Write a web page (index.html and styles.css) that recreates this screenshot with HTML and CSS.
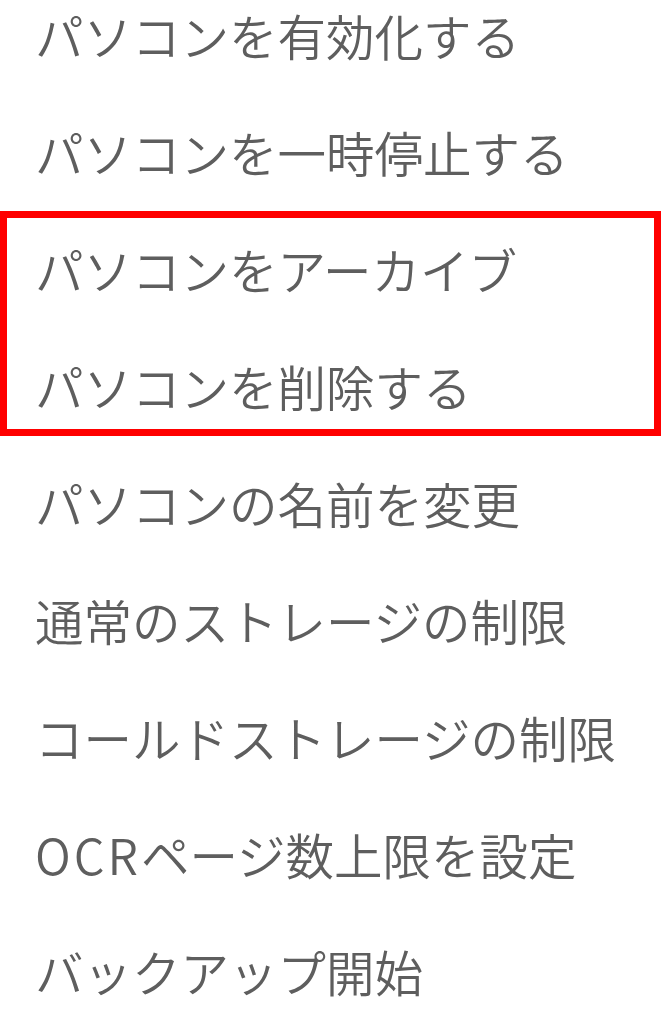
FILE: index.html
```html
<!DOCTYPE html>
<html lang="ja">
<head>
<meta charset="utf-8">
<title>メニュー</title>
<link rel="stylesheet" href="styles.css">
</head>
<body>
<div class="page">
  <ul class="menu">
    <li class="item">パソコンを有効化する</li>
    <li class="item">パソコンを一時停止する</li>
    <li class="item">パソコンをアーカイブ</li>
    <li class="item">パソコンを削除する</li>
    <li class="item">パソコンの名前を変更</li>
    <li class="item">通常のストレージの制限</li>
    <li class="item">コールドストレージの制限</li>
    <li class="item"><span class="latin">OCR</span>ページ数上限を設定</li>
    <li class="item">バックアップ開始</li>
  </ul>
  <div class="highlight"></div>
</div>
</body>
</html>
```
FILE: styles.css
```css
html, body {
  margin: 0;
  padding: 0;
  background: #ffffff;
}
.page {
  position: relative;
  width: 661px;
  height: 1021px;
  overflow: hidden;
}
.menu {
  list-style: none;
  margin: -23px 0 0 0;
  padding: 0 0 0 35px;
  display: flex;
  flex-direction: column;
}
.item {
  height: 117px;
  line-height: 117px;
  font-family: "Noto Sans CJK JP", "Noto Sans", sans-serif;
  font-size: 48.5px;
  font-weight: 350;
  color: #5e5e5e;
  white-space: nowrap;
}
.latin {
  letter-spacing: 3px;
}
.highlight {
  position: absolute;
  left: 0;
  top: 211px;
  width: 661px;
  height: 225px;
  box-sizing: border-box;
  border: 7px solid #ff0000;
}
```
